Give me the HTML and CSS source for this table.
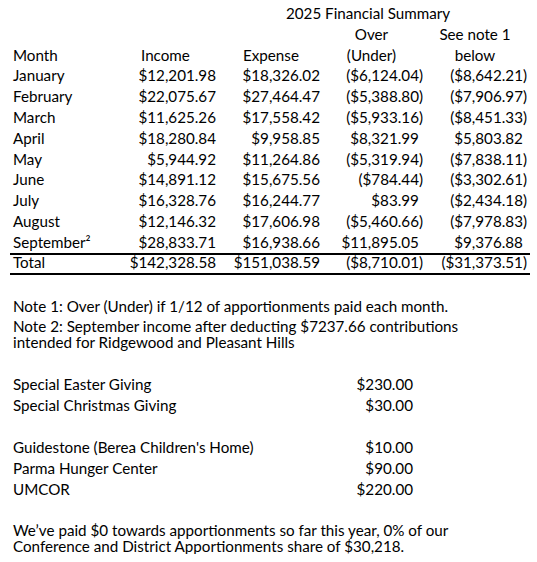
FILE: index.html
```html
<!DOCTYPE html>
<html>
<head>
<meta charset="utf-8">
<link rel="stylesheet" href="styles.css">
</head>
<body>
<div class="page">
  <div class="summary">
    <div class="title">2025 Financial Summary</div>
    <div class="row">
      <div></div><div></div><div></div>
      <div class="center">Over</div>
      <div class="center">See note 1</div>
    </div>
    <div class="row">
      <div>Month</div>
      <div class="h-income">Income</div>
      <div class="h-expense">Expense</div>
      <div class="center">(Under)</div>
      <div class="center">below</div>
    </div>
    <div class="row"><div>January</div><div class="num">$12,201.98</div><div class="num">$18,326.02</div><div class="num">($6,124.04)</div><div class="num">($8,642.21)</div></div>
    <div class="row"><div>February</div><div class="num">$22,075.67</div><div class="num">$27,464.47</div><div class="num">($5,388.80)</div><div class="num">($7,906.97)</div></div>
    <div class="row"><div>March</div><div class="num">$11,625.26</div><div class="num">$17,558.42</div><div class="num">($5,933.16)</div><div class="num">($8,451.33)</div></div>
    <div class="row"><div>April</div><div class="num">$18,280.84</div><div class="num">$9,958.85</div><div class="num">$8,321.99<span class="pad">)</span></div><div class="num">$5,803.82<span class="pad">)</span></div></div>
    <div class="row"><div>May</div><div class="num">$5,944.92</div><div class="num">$11,264.86</div><div class="num">($5,319.94)</div><div class="num">($7,838.11)</div></div>
    <div class="row"><div>June</div><div class="num">$14,891.12</div><div class="num">$15,675.56</div><div class="num">($784.44)</div><div class="num">($3,302.61)</div></div>
    <div class="row"><div>July</div><div class="num">$16,328.76</div><div class="num">$16,244.77</div><div class="num">$83.99<span class="pad">)</span></div><div class="num">($2,434.18)</div></div>
    <div class="row"><div>August</div><div class="num">$12,146.32</div><div class="num">$17,606.98</div><div class="num">($5,460.66)</div><div class="num">($7,978.83)</div></div>
    <div class="row"><div>September²</div><div class="num">$28,833.71</div><div class="num">$16,938.66</div><div class="num">$11,895.05<span class="pad">)</span></div><div class="num">$9,376.88<span class="pad">)</span></div></div>
    <div class="row total"><div>Total</div><div class="num">$142,328.58</div><div class="num">$151,038.59</div><div class="num">($8,710.01)</div><div class="num">($31,373.51)</div></div>
  </div>

  <div class="notes">
    <p class="note1">Note 1: Over (Under) if 1/12 of apportionments paid each month.</p>
    <p class="note2">Note 2: September income after deducting $7237.66 contributions<br>intended for Ridgewood and Pleasant Hills</p>
  </div>

  <div class="gifts first-group">
    <div class="gift"><span>Special Easter Giving</span><span class="amt">$230.00</span></div>
    <div class="gift"><span>Special Christmas Giving</span><span class="amt">$30.00</span></div>
  </div>

  <div class="gifts second-group">
    <div class="gift"><span>Guidestone (Berea Children's Home)</span><span class="amt">$10.00</span></div>
    <div class="gift"><span>Parma Hunger Center</span><span class="amt">$90.00</span></div>
    <div class="gift"><span>UMCOR</span><span class="amt">$220.00</span></div>
  </div>

  <p class="closing">We’ve paid $0 towards apportionments so far this year, 0% of our<br>Conference and District Apportionments share of $30,218.</p>
</div>
</body>
</html>
```

FILE: styles.css
```css
html, body {
  margin: 0;
  padding: 0;
  background: #fff;
}
body {
  color: #000;
  font-family: Lato, "Liberation Sans", sans-serif;
  font-size: 15.2px;
}
.page {
  padding: 3.1px 0 0 10px;
}
.summary {
  width: 520px;
}
.title {
  padding-left: 276px;
  line-height: 20.8px;
  height: 20.8px;
  white-space: nowrap;
}
.row {
  display: grid;
  grid-template-columns: 115px 88px 104px 103px 104px;
  padding: 0 3px;
  line-height: 20.8px;
  height: 20.8px;
  white-space: nowrap;
}
.num {
  text-align: right;
}
.pad {
  visibility: hidden;
}
.center {
  text-align: center;
}
.h-income {
  padding-left: 13px;
}
.h-expense {
  padding-left: 27px;
}
.total {
  height: auto;
  margin-top: 0.6px;
  border-top: 2px solid #000;
  border-bottom: 2px solid #000;
  line-height: 15.2px;
  padding-bottom: 2.8px;
}
.notes {
  padding-left: 3px;
}
.notes p {
  margin: 0;
}
.notes .note1 {
  margin-top: 20.7px;
  line-height: 20.8px;
}
.notes .note2 {
  margin-top: 0.9px;
  line-height: 16px;
}
.gifts {
  width: 400px;
  padding-left: 3px;
}
.first-group {
  margin-top: 24.6px;
}
.second-group {
  margin-top: 21.4px;
}
.gift {
  display: flex;
  justify-content: space-between;
  line-height: 20.8px;
  height: 20.8px;
}
.closing {
  margin: 22px 0 0;
  padding-left: 3px;
  line-height: 16px;
}
```
